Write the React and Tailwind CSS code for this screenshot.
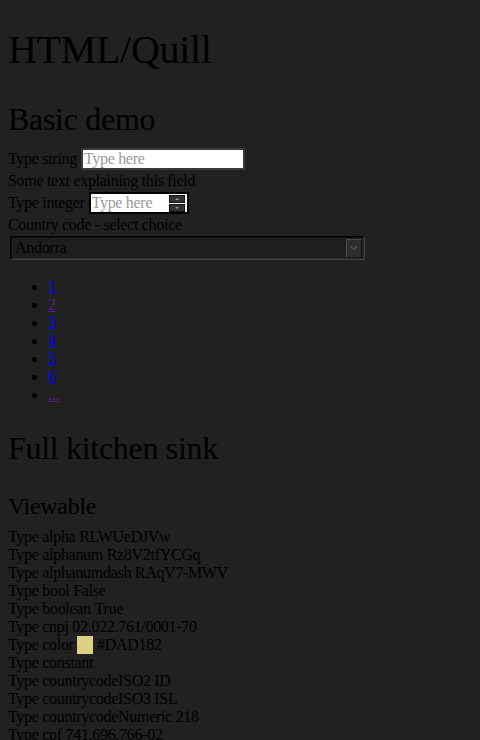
import React from 'react';

const pages = ['1', '2', '3', '4', '5', '6', '...'];
const visited = { '2': true, '...': true };

const viewable = [
  ['alpha', 'RLWUeDJVw'],
  ['alphanum', 'Rz8V2tfYCGq'],
  ['alphanumdash', 'RAqV7-MWV'],
  ['bool', 'False'],
  ['boolean', 'True'],
  ['cnpj', '02.022.761/0001-70'],
  ['color', '#DAD182'],
  ['constant', ''],
  ['countrycodeISO2', 'ID'],
  ['countrycodeISO3', 'ISL'],
  ['countrycodeNumeric', '218'],
  ['cpf', '741.696.766-02'],
];

function Spinner() {
  return (
    <div className="flex flex-col w-[16px] h-[17px] gap-[1px] mr-[2px]">
      <div className="flex-1 bg-[#333] border border-[#111] flex items-center justify-center">
        <div className="w-0 h-0 border-l-[2px] border-r-[2px] border-b-[2px] border-l-transparent border-r-transparent border-b-[#999]" />
      </div>
      <div className="flex-1 bg-[#333] border border-[#111] flex items-center justify-center">
        <div className="w-0 h-0 border-l-[2px] border-r-[2px] border-t-[2px] border-l-transparent border-r-transparent border-t-[#999]" />
      </div>
    </div>
  );
}

export default function App() {
  return (
    <div className="min-h-screen bg-[#212121] text-black px-2 pb-4 font-['Liberation_Serif',serif] text-[16px] leading-[18px] tracking-[-0.3px] overflow-hidden">
      <h1 className="mt-[27px] text-[40px] leading-[46px] font-normal">HTML/Quill</h1>

      <h2 className="mt-[28px] mb-[10px] text-[32px] leading-[37px] font-normal">Basic demo</h2>

      {/* string field */}
      <div className="h-[22px] flex items-center">
        <span>Type string</span>
        <input
          className="ml-[4px] w-[164px] h-[22px] bg-white border-2 border-[#3a3a3a] px-[1px] text-[16px] tracking-[-0.3px] font-['Liberation_Serif',serif] placeholder:text-[#9a9a9a] outline-none"
          placeholder="Type here"
        />
      </div>
      <div className="h-[22px] leading-[22px]">Some text explaining this field</div>

      {/* integer field */}
      <div className="h-[22px] flex items-center">
        <span>Type integer</span>
        <div className="ml-[4px] w-[100px] h-[22px] bg-white border-2 border-black flex items-center">
          <input
            className="flex-1 min-w-0 h-full bg-transparent px-[1px] text-[16px] tracking-[-0.3px] font-['Liberation_Serif',serif] placeholder:text-[#9a9a9a] outline-none"
            placeholder="Type here"
          />
          <Spinner />
        </div>
      </div>
      <div className="h-[22px] leading-[22px]">Country code - select choice</div>

      {/* select */}
      <div className="ml-[2px] w-[355px] h-[24px] bg-[#1e1e1e] border border-t-black border-l-black border-r-[#444] border-b-[#444] flex items-center">
        <div className="h-full flex-1 border border-t-[#111] border-l-[#111] border-r-[#2a2a2a] border-b-[#2a2a2a] flex items-center">
          <span className="pl-[3px] flex-1">Andorra</span>
          <div className="w-[16px] h-[19px] mr-[1px] bg-[#2e2e2e] border border-t-[#4a4a4a] border-l-[#4a4a4a] border-r-[#111] border-b-[#111] flex items-center justify-center">
            <svg width="8" height="6" viewBox="0 0 8 6">
              <path d="M1 1.5 L4 4.5 L7 1.5" fill="none" stroke="#555" strokeWidth="1.2" />
            </svg>
          </div>
        </div>
      </div>

      {/* pagination */}
      <ul className="mt-[18px] mb-0 pl-[40px] list-disc">
        {pages.map((p) => (
          <li key={p} className="leading-[18px]">
            <a href="#" className={visited[p] ? 'text-[#551A8B] underline' : 'text-[#0000EE] underline'}>
              {p}
            </a>
          </li>
        ))}
      </ul>

      <h2 className="mt-[26px] text-[32px] leading-[37px] font-normal">Full kitchen sink</h2>
      <h3 className="mt-[25px] text-[24px] leading-[28px] font-normal">Viewable</h3>

      <div className="mt-[8px]">
        {viewable.map(([k, v]) => (
          <div key={k} className="h-[18px] flex items-center whitespace-pre">
            <span>Type {k} </span>
            {k === 'color' ? (
              <>
                <span className="inline-block w-[16px] h-[18px] bg-[#DAD182]" />
                <span> {v}</span>
              </>
            ) : (
              <span>{v}</span>
            )}
          </div>
        ))}
      </div>
    </div>
  );
}
